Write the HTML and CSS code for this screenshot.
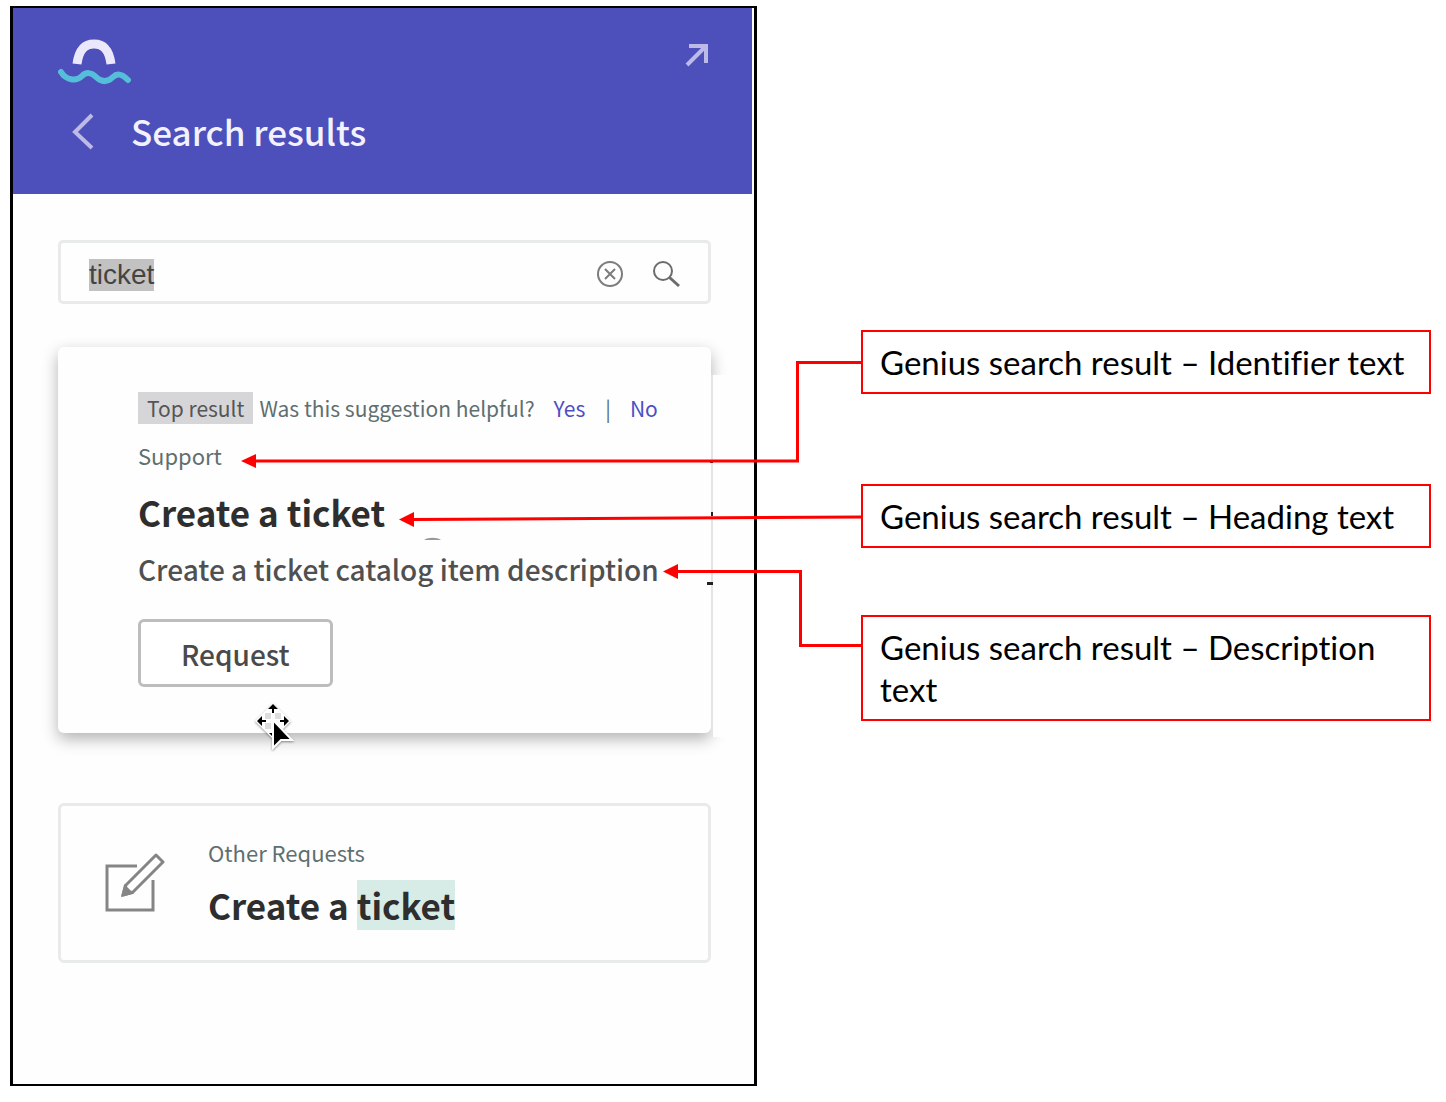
FILE: index.html
```html
<!DOCTYPE html>
<html lang="en">
<head>
    <meta charset="utf-8">
    <title>Search results</title>
    <link rel="stylesheet" href="styles.css">
</head>
<body>

<div class="board">
    <main class="panel">
        <header class="header">
            <div class="header-top">
                <svg class="logo" width="76" height="50" viewBox="0 0 76 50" fill="none" stroke-linecap="round" aria-label="Logo">
                    <path d="M19 26C21 11 27 6 36 6S51 11 53 26" stroke="#ece8fb" stroke-width="9" stroke-linecap="butt"/>
                    <path d="M3 34C8 42 18 44 24 38C28 34 33 34 38 39C44 45 50 44 55 39C60 34 65 37 70 42" stroke="#55bfd9" stroke-width="6"/>
                </svg>
                <button class="icon-button" type="button" aria-label="Open in full page">
                    <svg width="24" height="24" viewBox="0 0 24 24" fill="none" stroke="#bdbae8" stroke-width="4">
                        <path d="M4 3H21V20M21 3L2 22"/>
                    </svg>
                </button>
            </div>
            <div class="title-row">
                <button class="icon-button" type="button" aria-label="Back">
                    <svg width="24" height="38" viewBox="0 0 24 38" fill="none" stroke="#bdbae8" stroke-width="4">
                        <path d="M21 3L4 20L21 36"/>
                    </svg>
                </button>
                <h1>Search results</h1>
            </div>
        </header>

        <div class="content">
            <form class="search" id="searchForm">
                <input type="text" id="query" name="query" value="ticket" aria-label="Search">
                <button class="icon-button" type="reset" aria-label="Clear">
                    <svg width="28" height="28" viewBox="0 0 28 28" fill="none" stroke="#7a7c7d" stroke-width="2">
                        <circle cx="14" cy="14" r="12"/>
                        <path d="M9 9L19 19M19 9L9 19"/>
                    </svg>
                </button>
                <button class="icon-button" type="submit" aria-label="Search">
                    <svg width="28" height="28" viewBox="0 0 28 28" fill="none" stroke="#6a6c6d" stroke-width="2">
                        <circle cx="11" cy="11" r="9"/>
                        <path d="M17.500 17.500L27 26" stroke-width="3"/>
                    </svg>
                </button>
            </form>

            <section class="top-card">
                <div class="feedback">
                    <span class="badge">Top result</span>
                    <span>Was this suggestion helpful?</span>
                    <a href="#yes">Yes</a>
                    <span class="divider">|</span>
                    <a href="#no">No</a>
                </div>
                <p class="identifier">Support</p>
                <h2>Create a ticket</h2>
                <p class="description">Create a ticket catalog item description</p>
                <button class="request" type="button">Request</button>

                <svg class="marks" width="300" height="130" viewBox="0 0 300 130">
                    <path d="M10 83C14 80 23 80 27 83Z" fill="#999"/>
                    <path d="M296 3h3v3h-3zM297 55h2v4h-2zM293 125h6v3h-6z" fill="#222"/>
                </svg>
                <svg class="cursor" width="40" height="48" viewBox="0 0 40 48">
                    <path d="M18 1L36 19L18 37L0 19Z" fill="#fff"/>
                    <path d="M10 11h6v6h-6zM20 11h6v6h-6zM10 21h6v6h-6z" fill="#ddd"/>
                    <path d="M18 2L23 7H19V11H17V7H13ZM2 19L7 14V18H11V20H7V24ZM34 19L29 14V18H25V20H29V24ZM14 31H22L18 35Z" fill="#000"/>
                    <path d="M18 18V46L26 38H37Z" fill="#000" stroke="#fff" stroke-width="2"/>
                </svg>
            </section>

            <section class="result-card">
                <svg width="60" height="60" viewBox="0 0 60 60" fill="none" stroke="#858585" stroke-width="3">
                    <path d="M32 13H2V57H48V27"/>
                    <path d="M18 42L21 32L51 2L58 9L28 39Z" stroke-linejoin="round"/>
                    <path d="M18 42L20 34L26 40Z" fill="#858585"/>
                </svg>
                <div>
                    <p class="identifier">Other Requests</p>
                    <h2>Create a <mark>ticket</mark></h2>
                </div>
            </section>
        </div>
    </main>

    <aside class="callouts">
        <div class="callout">
            Genius search result – Identifier text
            <svg class="connector" width="640" height="60" viewBox="0 0 640 60">
                <path class="line" d="M639 30.500H574.500V129H30"/>
                <path class="head" d="M18 129L33 122V136Z"/>
            </svg>
        </div>
        <div class="callout callout-heading">
            Genius search result – Heading text
            <svg class="connector" width="640" height="60" viewBox="0 0 640 60">
                <path class="line" d="M639 31L188 33.500"/>
                <path class="head" d="M176 33.500L191 26V41Z"/>
            </svg>
        </div>
        <div class="callout callout-description">
            Genius search result – Description text
            <svg class="connector" width="640" height="60" viewBox="0 0 640 60">
                <path class="line" d="M639 28.500H577.500V-45.500H452"/>
                <path class="head" d="M440 -45.500L455 -53V-38Z"/>
            </svg>
        </div>
    </aside>
</div>

<script>
document.getElementById("query").focus();
document.getElementById("query").select();

document.getElementById("searchForm").addEventListener("submit", function (e) {
    e.preventDefault();
});
</script>

</body>
</html>
```
FILE: styles.css
```css
* {
    box-sizing: border-box;
}

body {
    margin: 0;
    background-color: #fff;
    color: #333;
    font-family: "Noto Sans CJK SC", "Noto Sans", sans-serif;
}

h1, h2, p {
    margin: 0;
}

.board {
    display: grid;
    grid-template-columns: 747fr 570fr;
    column-gap: 104px;
    min-height: 100vh;
    padding: 6px 15px 16px 10px;
}

/* widget */
.panel {
    border: 3px solid #000;
    border-width: 2px 3px;
    background-color: #fefefe;
}

.header {
    margin-right: 2px;
    padding: 30px 43px 39px 45px;
    background-color: #4d4fba;
}

.header-top {
    display: flex;
    justify-content: space-between;
    align-items: flex-start;
}

.header-top .icon-button {
    margin-top: 5px;
}

.title-row {
    display: flex;
    align-items: center;
    gap: 36px;
    margin-top: 19px;
    padding-left: 13px;
}

.icon-button {
    display: flex;
    padding: 0;
    border: none;
    background: none;
    cursor: pointer;
}

h1 {
    color: #f3f1fd;
    font-size: 35px;
    font-weight: 500;
    line-height: 48px;
}

.content {
    padding: 46px 43px 0 45px;
}

.search {
    display: flex;
    align-items: center;
    gap: 28px;
    height: 64px;
    padding: 4px 28px 0;
    border: 3px solid #e9ebeb;
    border-radius: 5px;
}

.search input {
    flex: 1;
    min-width: 0;
    padding: 2px 0 0;
    border: none;
    outline: none;
    background: none;
    color: #444;
    font-family: "Liberation Sans", Arial, sans-serif;
    font-size: 28px;
}

.search input::selection {
    background-color: #c2c2c2;
    color: #444;
}

.top-card {
    position: relative;
    margin-top: 43px;
    padding: 45px 0 46px 80px;
    border-radius: 6px;
    background-color: #fefefe;
    box-shadow: 0 6px 16px rgba(0, 0, 0, 0.3);
}

/* flat right edge over the shadow */
.top-card::after {
    content: "";
    position: absolute;
    left: 100%;
    top: 28px;
    bottom: -4px;
    width: 24px;
    border-left: 2px solid #e4e4e4;
    background-color: #fefefe;
}

.feedback {
    display: flex;
    color: #5f6f70;
    font-size: 21px;
    line-height: 32px;
    white-space: nowrap;
}

.badge {
    margin-right: 6px;
    padding: 0 9px;
    background-color: #d6d6d9;
    color: #555;
}

.feedback a {
    margin-left: 19px;
    color: #4d4fc4;
    text-decoration: none;
}

.divider {
    margin-left: 20px;
}

.identifier {
    color: #5f6f70;
    font-size: 22px;
    line-height: 32px;
}

h2 {
    color: #2e2e2e;
    font-size: 35px;
    font-weight: 700;
    line-height: 50px;
}

.top-card .identifier {
    margin-top: 15px;
}

.top-card h2 {
    margin-top: 16px;
}

.description {
    margin-top: 12px;
    color: #505050;
    font-size: 28px;
    font-weight: 500;
    line-height: 40px;
}

.request {
    display: block;
    margin-top: 30px;
    padding: 11px 40px 9px;
    border: 3px solid #bdbdbd;
    border-radius: 6px;
    background-color: #fff;
    color: #4a4a4a;
    font-family: inherit;
    font-size: 28px;
    font-weight: 500;
    line-height: 42px;
    cursor: pointer;
}

.marks {
    position: absolute;
    z-index: 1;
    right: -3px;
    top: 110px;
}

.cursor {
    position: absolute;
    left: 197px;
    top: 355px;
    filter: drop-shadow(0 1px 1px rgba(0, 0, 0, 0.4));
}

.result-card {
    display: flex;
    align-items: center;
    gap: 43px;
    margin-top: 70px;
    padding: 30px 44px;
    border: 3px solid #e9ebeb;
    border-radius: 6px;
}

.result-card h2 {
    margin-top: 12px;
}

mark {
    display: inline-block;
    background-color: #d8ece7;
    color: inherit;
}

/* labels on the right */
.callouts {
    position: relative;
    z-index: 2;
    padding-top: 324px;
}

.callout {
    position: relative;
    padding: 9px 17px;
    border: 2px solid #f00;
    color: #000;
    font-family: Lato, sans-serif;
    font-size: 33px;
    font-variant-ligatures: none;
    line-height: 42px;
}

.callout-heading {
    margin-top: 90px;
}

.callout-description {
    margin-top: 67px;
}

.connector {
    position: absolute;
    right: 100%;
    top: 0;
    overflow: visible;
    pointer-events: none;
}

.line {
    fill: none;
    stroke: #f00;
    stroke-width: 3px;
}

.head {
    fill: #f00;
}
```
